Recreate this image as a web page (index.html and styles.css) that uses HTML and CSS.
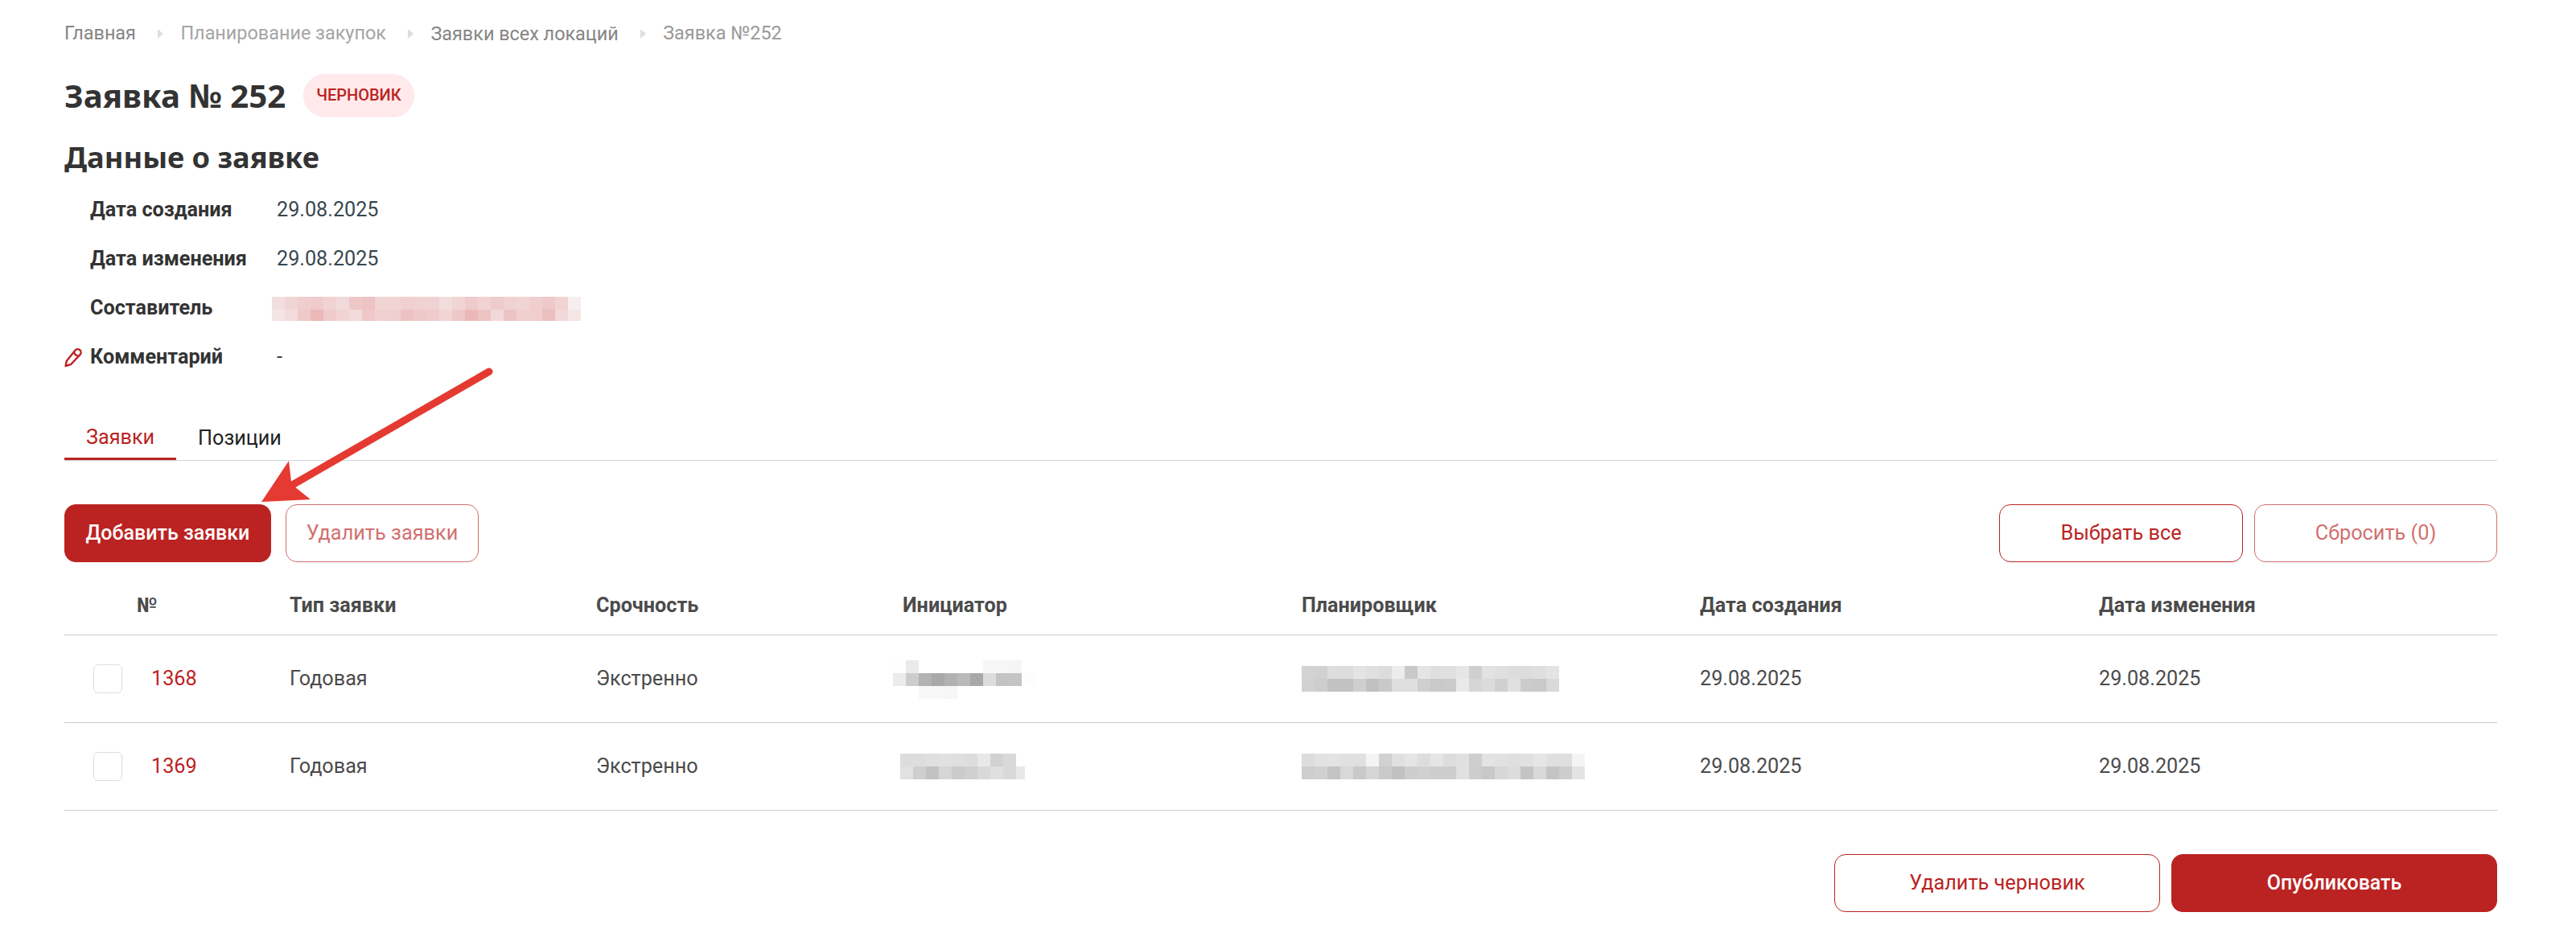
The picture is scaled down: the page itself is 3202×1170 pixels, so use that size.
FILE: index.html
```html
<!DOCTYPE html>
<html lang="ru">
<head>
  <meta charset="UTF-8">
  <title>Заявка № 252</title>
  <link rel="stylesheet" href="styles.css">
</head>
<body>
  <main class="page">
    <!-- Хлебные крошки -->
    <nav class="breadcrumbs">
      <a class="crumb">Главная</a>
      <i class="crumb-sep"></i>
      <span class="crumb muted">Планирование закупок</span>
      <i class="crumb-sep"></i>
      <a class="crumb low">Заявки всех локаций</a>
      <i class="crumb-sep"></i>
      <span class="crumb current">Заявка №252</span>
    </nav>

    <header class="title-row">
      <h1>Заявка № 252</h1>
      <span class="badge">ЧЕРНОВИК</span>
    </header>

    <!-- Данные -->
    <section class="details">
      <h2>Данные о заявке</h2>
      <div class="detail"><span class="icon"></span><b>Дата создания</b><span class="value">29.08.2025</span></div>
      <div class="detail"><span class="icon"></span><b>Дата изменения</b><span class="value">29.08.2025</span></div>
      <div class="detail"><span class="icon"></span><b>Составитель</b><svg class="mosaic author" data-rows="de d5 ce cb d3 da c8 c3 d4 d5 d0 d2 d2 dc d5 cb d3 cc d2 d4 ce c9 d3 ef / e4 dc ca b9 cb d3 db c9 d0 cf c2 c9 cc d5 c8 b8 c4 d9 c3 cf ce be d8 e5"></svg></div>
      <div class="detail">
        <span class="icon">
          <svg class="pencil" viewBox="0 0 24 26"><path d="M1.6 24L2.7 18L13.5 4.6a3.9 3.9 0 0 1 5.6-.6a4 4 0 0 1 .7 5.6L8 22.2zM12 6.8c.6 3 2.8 4.6 5.6 4.8"/></svg>
        </span>
        <b>Комментарий</b><span class="value">-</span>
      </div>
    </section>

    <!-- Вкладки -->
    <div class="tabs">
      <a class="tab active">Заявки</a>
      <a class="tab">Позиции</a>
    </div>

    <div class="toolbar">
      <button class="btn filled">Добавить заявки</button>
      <button class="btn disabled">Удалить заявки</button>
      <span class="spacer"></span>
      <button class="btn wide">Выбрать все</button>
      <button class="btn wide disabled">Сбросить (0)</button>
    </div>

    <!-- Таблица -->
    <div class="table">
      <div class="row head">
        <span class="num">№</span>
        <span>Тип заявки</span>
        <span>Срочность</span>
        <span>Инициатор</span>
        <span>Планировщик</span>
        <span>Дата создания</span>
        <span>Дата изменения</span>
      </div>
      <div class="row">
        <span class="select"><i class="checkbox"></i><a>1368</a></span>
        <span>Годовая</span>
        <span>Экстренно</span>
        <svg class="mosaic initiator-1" data-rows="fe ea ff ff ff ff ff f6 f6 f5 ff / eb cc b2 a9 b1 b9 a8 dc c3 c4 fd / ff ff f8 f8 f6 ff ff ff ff ff ff"></svg>
        <svg class="mosaic planner-1" data-rows="d2 d1 dd dd e4 e0 dc ec c9 e5 df e0 e6 cf e2 e0 dd dd df e4 / d1 cd c2 c2 cf c1 c9 de de cf c9 cb e9 d6 db d0 e0 cb c9 d9"></svg>
        <span>29.08.2025</span>
        <span>29.08.2025</span>
      </div>
      <div class="row">
        <span class="select"><i class="checkbox"></i><a>1369</a></span>
        <span>Годовая</span>
        <span>Экстренно</span>
        <svg class="mosaic initiator-2" data-rows="dd dd df e1 df dd e8 d2 d9 ff / e1 cf c2 d6 cb d0 d9 df d9 e8"></svg>
        <svg class="mosaic planner-2" data-rows="dd e2 e3 e0 e0 f4 d1 e0 e5 dd e5 dd e0 ce e3 e1 df e1 e6 df df f4 / ce d1 c3 d8 c9 d6 ca c1 cd d1 cd cd e1 cd c8 d7 dc c4 d8 c4 cd e3"></svg>
        <span>29.08.2025</span>
        <span>29.08.2025</span>
      </div>
    </div>

    <footer class="actions">
      <button class="btn">Удалить черновик</button>
      <button class="btn filled">Опубликовать</button>
    </footer>

    <!-- Стрелка-подсказка -->
    <svg class="arrow" viewBox="0 0 300 180">
      <path class="shaft" d="M293 12L50 152"/>
      <path class="tip" d="M10 174L44 123L47 149L51 155L71 171z"/>
    </svg>
  </main>
  <script src="mosaic.js"></script>
</body>
</html>
```
FILE: styles.css
```css
* {
  margin: 0;
  padding: 0;
  box-sizing: border-box;
}
body {
  background: #fff;
  color: #4b4b4b;
  font-family: Roboto, sans-serif;
  font-size: 25.2px;
  line-height: 30px;
}
.page {
  position: relative;
  padding: 26px 98px 36px 80px;
}

/* ХЛЕБНЫЕ КРОШКИ */
.breadcrumbs {
  display: flex;
  align-items: center;
  height: 30px;
  font-size: 23.4px;
  color: #858585;
}
.crumb.muted { color: #a5a5a5; }
.crumb.current { color: #999; }
.crumb.low { padding-top: 2px; }
.crumb-sep {
  margin: 2px 21px 0 27.5px;
  border-left: 7px solid #dedede;
  border-top: 6.5px solid transparent;
  border-bottom: 6.5px solid transparent;
}

/* ЗАГОЛОВОК */
.title-row {
  display: flex;
  align-items: center;
  gap: 22px;
  margin-top: 36px;
  height: 54px;
}
h1, h2 {
  font-family: "Noto Sans", sans-serif;
  font-weight: 700;
  color: #333;
}
h1 { font-size: 40.2px; }
h2 {
  font-size: 36.2px;
  line-height: 48px;
}
.badge {
  height: 54px;
  padding: 0 16px;
  border-radius: 27px;
  background: #ffe9ea;
  color: #bb2322;
  font-size: 20px;
  font-weight: 500;
  line-height: 53px;
}

/* ДАННЫЕ О ЗАЯВКЕ */
.details { margin-top: 25px; }
.details h2 { margin-bottom: 11px; }
.detail {
  display: flex;
  align-items: center;
  height: 61px;
  padding-top: 1px;
  color: #333;
}
.detail .icon { width: 32px; }
.detail b { width: 232px; }
.detail .value { color: #37474f; }
.pencil {
  display: block;
  width: 24px;
  height: 26px;
  fill: none;
  stroke: #bb2322;
  stroke-width: 2.4;
  stroke-linejoin: round;
}

/* СКРЫТЫЕ ИМЕНА */
.mosaic { height: 32px; }
.mosaic.author { width: 384px; height: 30px; margin: 2px 0 0 -6px; }
.mosaic.initiator-1 { width: 176px; height: 48px; margin: 2px 0 0 -12px; }
.mosaic.initiator-2 { width: 155px; margin: 0 0 0 -3px; }
.mosaic.planner-1 { width: 320px; }
.mosaic.planner-2 { width: 352px; margin-bottom: 1px; }

/* ВКЛАДКИ */
.tabs {
  display: flex;
  margin-top: 41px;
  border-bottom: 1px solid #d0d5dd;
}
.tab {
  height: 57px;
  padding: 15px 26px 0 27px;
  color: #222;
}
.tab.active {
  padding: 14px 27px 0;
  color: #bb2322;
  border-bottom: 3px solid #bb2322;
}

/* КНОПКИ */
.toolbar {
  display: flex;
  margin-top: 54px;
}
.btn {
  height: 72px;
  padding-bottom: 2px;
  border: 1px solid #bb2322;
  border-radius: 14px;
  background: #fff;
  color: #bb2322;
  font: 400 25.3px Roboto, sans-serif;
}
.btn.filled {
  background: #bb2322;
  color: #fff;
  font-size: 25px;
  font-weight: 500;
}
.btn.disabled { opacity: 0.65; }
.toolbar .btn { width: 257px; }
.toolbar .btn.disabled { width: 240px; margin-left: 18px; }
.spacer { flex: 1; }
.toolbar .btn.wide { width: 303px; }
.toolbar .btn.wide.disabled { width: 302px; margin-left: 14px; }

/* ТАБЛИЦА */
.row {
  display: grid;
  grid-template-columns: 280px 381px 381px 496px 495px 496px 1fr;
  align-items: center;
  height: 109px;
  border-bottom: 1px solid #ccc;
}
.row.head {
  height: 91px;
  padding-top: 18px;
  font-weight: 700;
}
.num { padding-left: 90px; }
.select {
  display: flex;
  align-items: center;
  gap: 36px;
  padding-left: 36px;
}
.select a { color: #bb2322; }
.checkbox {
  width: 36px;
  height: 36px;
  border: 1px solid #ddd;
  border-radius: 6px;
}

.actions {
  display: flex;
  justify-content: flex-end;
  gap: 14px;
  margin-top: 54px;
}
.actions .btn { width: 405px; }

.arrow {
  position: absolute;
  left: 315px;
  top: 450px;
  width: 300px;
  height: 180px;
}
.shaft {
  fill: none;
  stroke: #e43a31;
  stroke-width: 9;
  stroke-linecap: round;
}
.tip { fill: #e43a31; }
```
FILE: mosaic.js
```js
// рисует квадраты 16x16 поверх скрытых имён
const CELL = 16;

document.querySelectorAll('.mosaic').forEach(svg => {
  const red = svg.classList.contains('author');
  svg.dataset.rows.split(' / ').forEach((row, y) => {
    row.split(' ').forEach((hex, x) => {
      const v = parseInt(hex, 16);
      const r = red ? Math.round(235 + (v - 185) * 0.22) : v;
      const rect = document.createElementNS('http://www.w3.org/2000/svg', 'rect');
      rect.setAttribute('x', x * CELL);
      rect.setAttribute('y', y * CELL);
      rect.setAttribute('width', CELL);
      rect.setAttribute('height', CELL);
      rect.setAttribute('fill', `rgb(${r}, ${v}, ${v})`);
      svg.appendChild(rect);
    });
  });
});
```
